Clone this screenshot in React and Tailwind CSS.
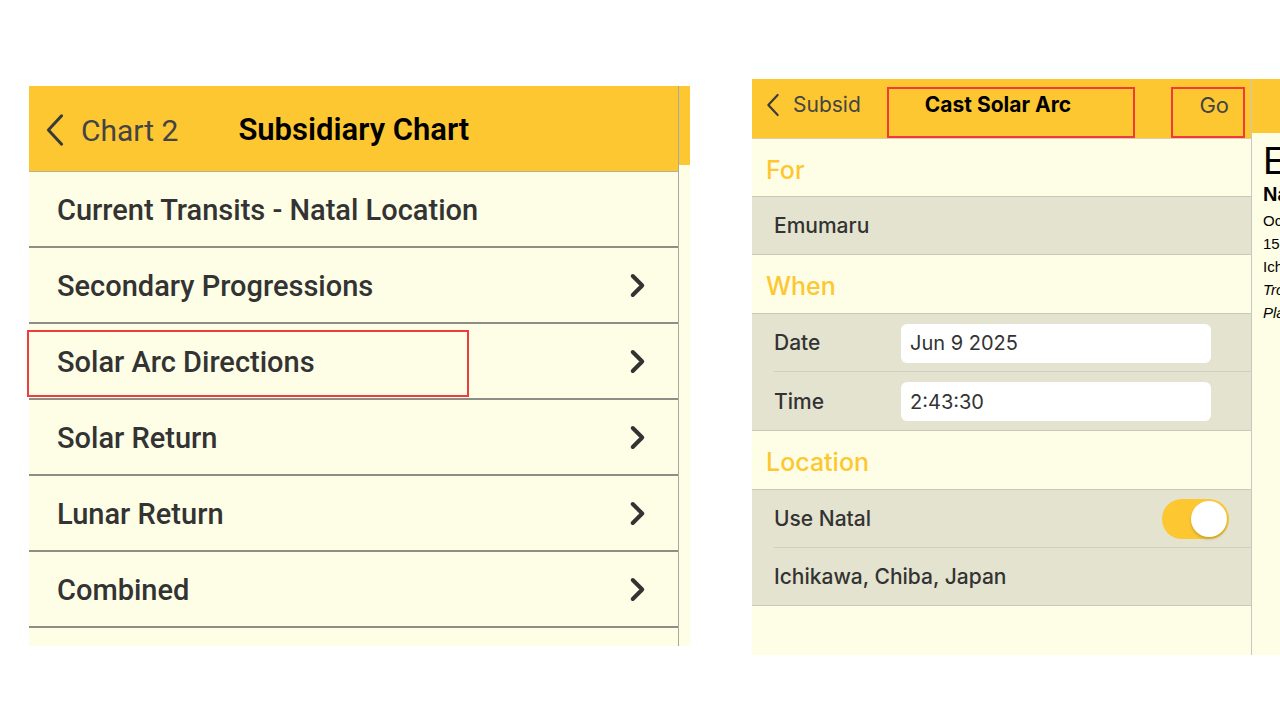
import React from 'react';

const items = [
  { label: 'Current Transits - Natal Location', chevron: false },
  { label: 'Secondary Progressions', chevron: true },
  { label: 'Solar Arc Directions', chevron: true, marked: true },
  { label: 'Solar Return', chevron: true },
  { label: 'Lunar Return', chevron: true },
  { label: 'Combined', chevron: true },
];

const BackChevron = ({ className }) => (
  <svg viewBox="0 0 24 36" className={className} fill="none" stroke="currentColor" strokeWidth="3.2" strokeLinecap="round" strokeLinejoin="round">
    <path d="M19 3 L5 18 L19 33" />
  </svg>
);

const RowChevron = () => (
  <svg viewBox="0 0 20 26" className="w-[19px] h-[25px] text-[#333]" fill="none" stroke="currentColor" strokeWidth="4.2" strokeLinecap="round" strokeLinejoin="round">
    <path d="M5 3 L15 13 L5 23" />
  </svg>
);

const SubsidiaryPanel = () => (
  <div className="flex w-[661px] h-[560px] mt-[86px] bg-[#fefee6]" style={{ fontFamily: 'Roboto, "Liberation Sans", sans-serif' }}>
    <div className="w-[649px] flex flex-col">
      <div className="h-[86px] bg-[#fdc732] border-b border-[#b8b09a] flex items-center pt-[3px]">
        <BackChevron className="w-[24px] h-[34px] ml-[14px] text-[#3a3a3a]" />
        <span className="ml-[14px] text-[30px] text-[#444]">Chart 2</span>
        <span className="ml-[60px] text-[31px] font-semibold text-black">Subsidiary Chart</span>
      </div>
      {items.map((item) => (
        <div key={item.label} className="relative h-[76px] shrink-0 border-b-2 border-[#8e8e86] flex items-center justify-between pl-[28px] pr-[31px]">
          <span className="text-[29px] font-medium text-[#333] pt-[3px]">{item.label}</span>
          {item.chevron && <RowChevron />}
          {item.marked && (
            <div className="absolute left-[-2px] top-[6px] w-[442px] h-[67px] border-2 border-[#ef3b3b]" />
          )}
        </div>
      ))}
      <div className="flex-1" />
    </div>
    <div className="w-[12px] border-l border-[#a8a8a0] flex flex-col">
      <div className="h-[79px] bg-[#fdc732]" />
    </div>
  </div>
);

const SectionHead = ({ children, h }) => (
  <div className={`${h} flex items-center pl-[14px] pt-[6px] text-[25px] font-medium text-[#fdc732] border-b border-[#c9c8bc]`} style={{ fontFamily: 'Inter, sans-serif' }}>
    {children}
  </div>
);

const label = 'text-[21px] font-medium text-[#333]';
const inter = { fontFamily: 'Inter, sans-serif' };

const CastPanel = () => (
  <div className="flex w-[528px] h-[576px] mt-[79px] bg-[#fefee6]" style={{ fontFamily: '"Liberation Sans", Inter, sans-serif' }}>
    <div className="w-[499px] flex flex-col">
      <div className="relative h-[60px] bg-[#fdc732] border-b border-[#d6cfa8] flex items-center" style={inter}>
        <BackChevron className="w-[16px] h-[26px] ml-[13px] mb-[8px] text-[#3a3a3a]" />
        <span className="ml-[12px] text-[21px] text-[#444] mb-[7px]">Subsid</span>
        <span className="ml-[64px] text-[21px] font-bold text-black mb-[7px]">Cast Solar Arc</span>
        <span className="ml-auto mr-[22px] text-[22px] text-[#444] mb-[7px]">Go</span>
        <div className="absolute left-[135px] top-[8px] w-[248px] h-[51px] border-2 border-[#ef3b3b]" />
        <div className="absolute left-[419px] top-[8px] w-[74px] h-[51px] border-2 border-[#ef3b3b]" />
      </div>

      <SectionHead h="h-[58px]">For</SectionHead>
      <div className="bg-[#e4e3cf] border-b border-[#c9c8bc]">
        <div className={`h-[57px] flex items-center pl-[22px] pt-[1px] ${label}`} style={inter}>Emumaru</div>
      </div>

      <SectionHead h="h-[59px]">When</SectionHead>
      <div className="bg-[#e4e3cf] border-b border-[#c9c8bc] pl-[22px]" style={inter}>
        <div className="h-[58px] flex items-center border-b border-[#cfcec0] pt-[1px]">
          <span className={`w-[127px] ${label}`}>Date</span>
          <div className="w-[310px] h-[39px] bg-white rounded-[6px] flex items-center pl-[9px] text-[20px] text-[#333]">Jun 9 2025</div>
        </div>
        <div className="h-[58px] flex items-center pt-[1px]">
          <span className={`w-[127px] ${label}`}>Time</span>
          <div className="w-[310px] h-[39px] bg-white rounded-[6px] flex items-center pl-[9px] text-[20px] text-[#333]">2:43:30</div>
        </div>
      </div>

      <SectionHead h="h-[59px]">Location</SectionHead>
      <div className="bg-[#e4e3cf] border-b border-[#c9c8bc] pl-[22px]" style={inter}>
        <div className="h-[58px] flex items-center justify-between border-b border-[#cfcec0] pr-[22px]">
          <span className={label}>Use Natal</span>
          <div className="w-[67px] h-[40px] rounded-full bg-[#fdc732] flex items-center justify-end pr-[2px]">
            <div className="w-[36px] h-[36px] rounded-full bg-white shadow-[0_2px_3px_rgba(0,0,0,0.2)]" />
          </div>
        </div>
        <div className="h-[57px] flex items-center pt-[1px]">
          <span className={label}>Ichikawa, Chiba, Japan</span>
        </div>
      </div>
      <div className="flex-1" />
    </div>

    <div className="w-[29px] border-l border-[#c8c8c0] flex flex-col overflow-hidden">
      <div className="h-[54px] bg-[#fdc732] shrink-0" />
      <div className="pl-[11px] pt-[7px] text-black whitespace-nowrap" style={{ fontFamily: '"Liberation Sans", Arial, sans-serif' }}>
        <div className="text-[38px] leading-[42px]">Emumaru</div>
        <div className="text-[20px] leading-[24px] font-bold">Natal</div>
        <div className="text-[15px] leading-[23px] mt-[3px]">Oct</div>
        <div className="text-[15px] leading-[23px]">15</div>
        <div className="text-[15px] leading-[23px]">Ichikawa</div>
        <div className="text-[15px] leading-[23px] italic">Tropical</div>
        <div className="text-[15px] leading-[23px] italic">Placidus</div>
      </div>
    </div>
  </div>
);

export default function App() {
  return (
    <div className="w-[1280px] h-[720px] bg-white flex items-start overflow-hidden">
      <div className="ml-[29px]">
        <SubsidiaryPanel />
      </div>
      <div className="ml-[62px]">
        <CastPanel />
      </div>
    </div>
  );
}
